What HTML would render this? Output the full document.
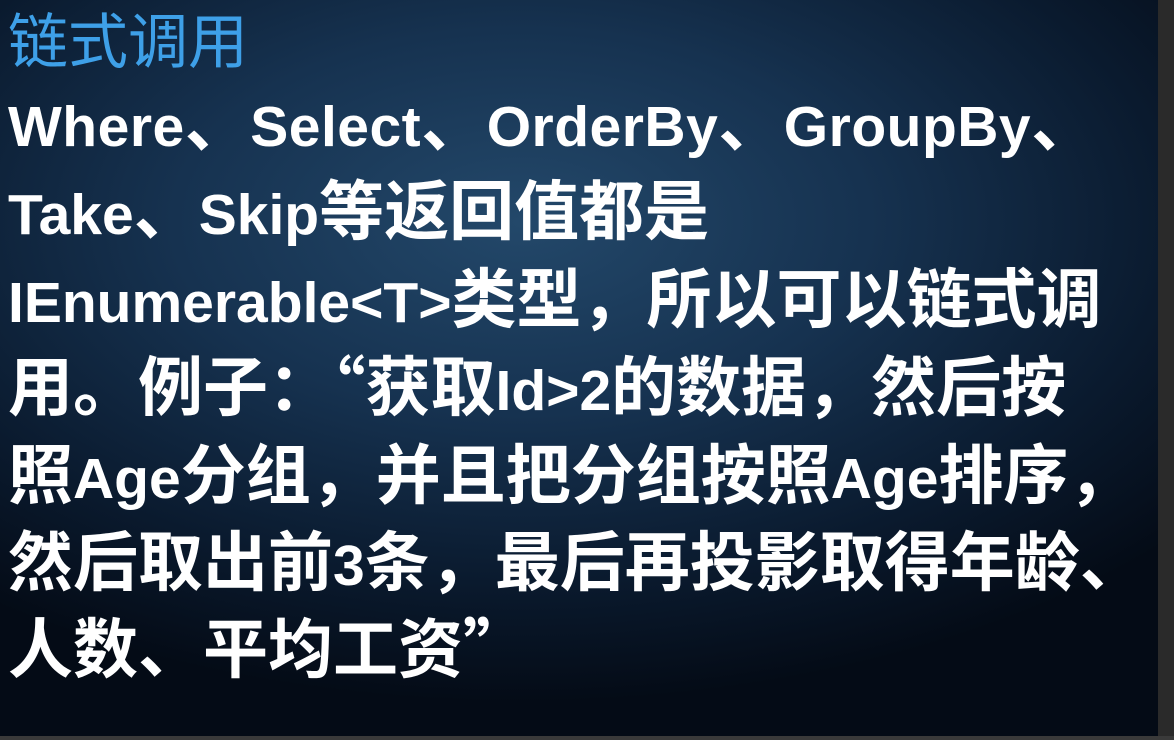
<!DOCTYPE html>
<html><head><meta charset="utf-8"><style>
html,body{margin:0;padding:0;}
body{width:1174px;height:740px;overflow:hidden;position:relative;background:#0b1a2b;}
.bg{position:absolute;left:0;top:0;width:1158px;height:740px;background:radial-gradient(ellipse 75% 65% at 45% 30%,#23486a 0%,#163250 40%,#0a1a2e 75%,#040b16 100%);}
.strip{position:absolute;left:1158px;top:0;width:16px;height:740px;background:#2a2a2a;}
.bot{position:absolute;left:0;top:736px;width:1174px;height:4px;background:#3a3a3a;}
.t{position:absolute;left:8px;top:0px;font:60px "Noto Sans CJK SC",sans-serif;color:#3ea0e8;line-height:76px;white-space:nowrap;}
.l{position:absolute;left:8px;font:bold 65px "Noto Sans CJK SC",sans-serif;color:#fff;white-space:nowrap;line-height:80px;}
.l b{font:bold 57px "Liberation Sans",sans-serif;}
</style></head><body>
<div class="bg"></div><div class="strip"></div><div class="bot"></div>
<div class="t">链式调用</div>
<div class="l" style="top:78px;letter-spacing:0.5px"><b>Where</b>、<b>Select</b>、<b>OrderBy</b>、<b>GroupBy</b>、</div>
<div class="l" style="top:166px"><b>Take</b>、<b>Skip</b>等返回值都是</div>
<div class="l" style="top:254px"><b>IEnumerable&lt;T&gt;</b>类型，所以可以链式调</div>
<div class="l" style="top:342px">用。例子：“获取<b>Id&gt;2</b>的数据，然后按</div>
<div class="l" style="top:430px">照<b>Age</b>分组，并且把分组按照<b>Age</b>排序，</div>
<div class="l" style="top:517px">然后取出前<b>3</b>条，最后再投影取得年龄、</div>
<div class="l" style="top:604px">人数、平均工资”</div>
</body></html>
